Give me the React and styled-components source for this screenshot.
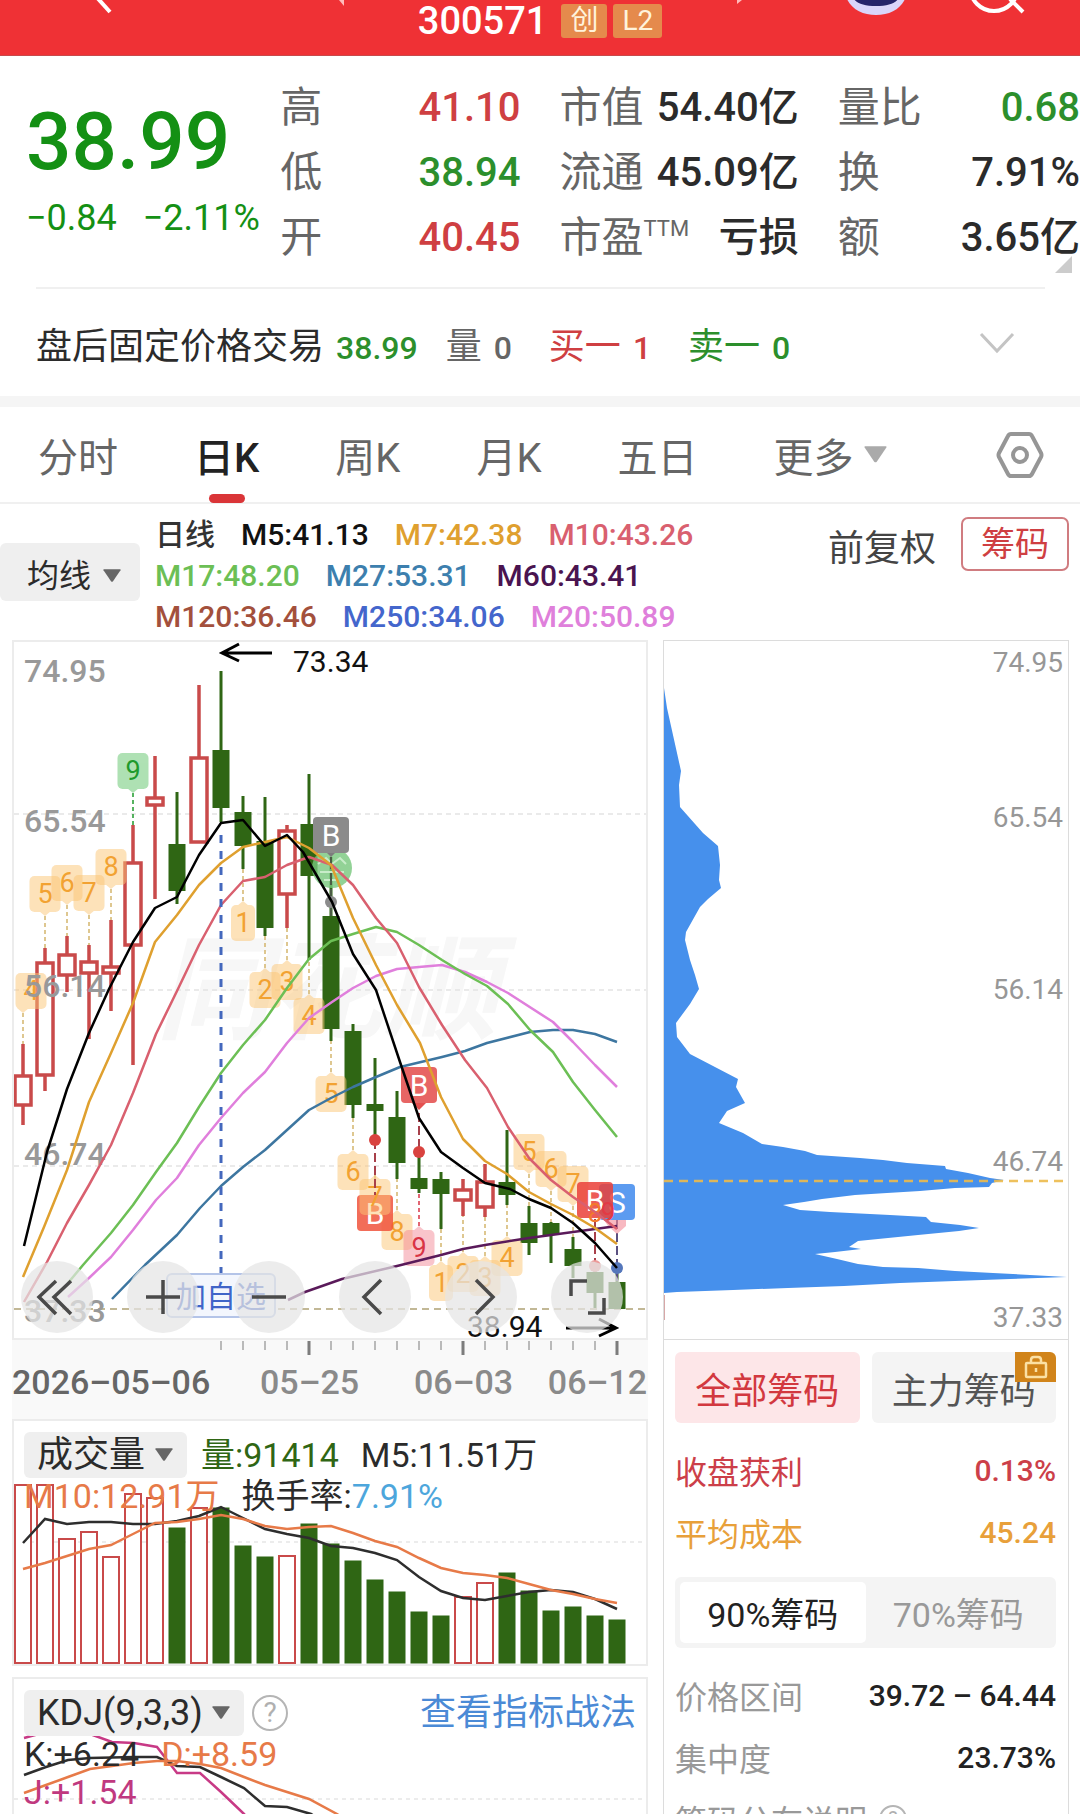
import React from "react";
import styled, { createGlobalStyle } from "styled-components";

const C = {
  up: "#cf3f42",
  down: "#2c8f2c",
  candleUp: "#c94a4a",
  candleDown: "#2f6614",
  ink: "#2b2b2b",
  label: "#666666",
  faint: "#999999",
  orange: "#e77a48",
};

const sans = '"Roboto", "Noto Sans CJK SC", sans-serif';

const Global = createGlobalStyle`
  * { box-sizing: border-box; }
  body { margin: 0; background: #fff; }
  button, select { font: inherit; color: inherit; border: 0; background: none; padding: 0; margin: 0; }
  dl, dd, dt, h1, p { margin: 0; font-weight: inherit; font-size: inherit; }
`;

const Screen = styled.div`
  height: 100vh;
  overflow: hidden;
  background: #fff;
  color: ${C.ink};
  font-family: ${sans};
`;

/* ---------- header ---------- */
const Header = styled.header`
  display: grid;
  grid-template-columns: 1fr auto 1fr;
  height: 56px;
  background: #ef3135;
  border-bottom: 1px solid #c8494b;
  color: #fff;
`;
const HeaderSide = styled.div`
  display: flex;
  align-items: flex-start;
  justify-content: ${(p) => (p.$end ? "flex-end" : "space-between")};
  gap: ${(p) => (p.$end ? "62px" : "0")};
  padding: ${(p) => (p.$end ? "0 53px 0 75px" : "0 73px 0 92px")};
  & > :first-child { margin-right: auto; }
`;
const IconButton = styled.button`
  display: flex;
  color: ${(p) => p.$color || "#fff"};
`;
const Title = styled.div`
  display: flex;
  align-items: center;
  gap: 6px;
  height: 42px;
`;
const Code = styled.h1`
  && { font-size: 38px; font-weight: 500; }
  line-height: 42px;
  margin-right: 8px;
`;
const Tag = styled.span`
  height: 34px;
  padding: 0 9px;
  border-radius: 3px;
  background: #e58a4c;
  color: #fff3dc;
  font-size: 28px;
  line-height: 34px;
`;

/* ---------- quote ---------- */
const Quote = styled.section`
  position: relative;
  display: grid;
  grid-template-columns: 254fr 279fr 278fr 242fr;
  padding: 19px 0 17px 26px;
`;
const Price = styled.div`
  padding-top: 22px;
  color: #149014;
  white-space: nowrap;
`;
const Last = styled.p`
  && { font-size: 80px; font-weight: 500; }
  line-height: 90px;
`;
const Change = styled.p`
  display: flex;
  gap: 26px;
  line-height: 62px;
  && { font-size: 36px; }
`;
const Stats = styled.dl`
  padding-right: ${(p) => (p.$last ? "0" : "39px")};
`;
const Stat = styled.div`
  display: flex;
  justify-content: space-between;
  height: 65px;
  line-height: 65px;
  white-space: nowrap;
`;
const StatName = styled.dt`
  && { font-size: 42px; }
  color: ${C.label};
  sup { font-size: 22px; line-height: 0; vertical-align: 16px; font-weight: 400; }
`;
const StatValue = styled.dd`
  && { font-size: 40px; font-weight: 500; }
  color: ${(p) => p.$color || C.ink};
`;
const Corner = styled.svg`
  position: absolute;
  right: 8px;
  bottom: 14px;
`;

const AfterHours = styled.section`
  display: flex;
  align-items: center;
  height: 109px;
  margin: 0 35px 0 36px;
  border-top: 2px solid #f0f0f0;
  font-size: 36px;
  white-space: nowrap;
`;
const Pair = styled.span`
  display: flex;
  align-items: baseline;
  gap: 12px;
  margin-right: ${(p) => p.$after || 0}px;
  color: ${(p) => p.$color || C.ink};
`;
const Num = styled.span`
  font-size: 32px;
  font-weight: 500;
  color: ${(p) => p.$color || "inherit"};
`;
const Push = styled.span`
  margin-left: auto;
  padding-right: 30px;
  display: flex;
`;

/* ---------- tabs ---------- */
const Tabs = styled.nav`
  display: flex;
  align-items: stretch;
  gap: 76px;
  height: 108px;
  padding: 0 36px 0 38px;
  border-top: 11px solid #f5f5f5;
  border-bottom: 2px solid #f0f0f0;
`;
const Tab = styled.button`
  position: relative;
  display: flex;
  align-items: center;
  gap: 10px;
  font-size: 40px;
  white-space: nowrap;
  font-weight: ${(p) => (p.$on ? 500 : 400)};
  color: ${(p) => (p.$on ? "#222" : "#666")};
  &::after {
    content: "";
    display: ${(p) => (p.$on ? "block" : "none")};
    position: absolute;
    left: calc(50% - 18px);
    bottom: -1px;
    width: 36px;
    height: 9px;
    border-radius: 5px;
    background: #da3538;
  }
`;
const Settings = styled(IconButton)`
  align-items: center;
  margin-left: auto;
`;

/* ---------- indicator bar ---------- */
const Bar = styled.section`
  display: flex;
  align-items: flex-start;
  height: 136px;
  padding-right: 11px;
`;
const Picker = styled.label`
  display: inline-grid;
  align-items: center;
  margin-top: ${(p) => (p.$left ? 39 : 0)}px;
  padding-top: ${(p) => (p.$left ? 8 : 0)}px;
  height: ${(p) => (p.$left ? 58 : 46)}px;
  border-radius: 6px;
  background: #efefef;
  font-size: ${(p) => (p.$left ? 32 : 36)}px;
  color: ${C.ink};
  & > * { grid-area: 1 / 1; }
  svg { justify-self: end; margin-right: ${(p) => (p.$left ? 19 : 14)}px; pointer-events: none; }
  select {
    appearance: none;
    height: 100%;
    padding: 0 ${(p) => (p.$left ? 48 : 41)}px 0 ${(p) => (p.$left ? 27 : 13)}px;
  }
`;
const Averages = styled.div`
  padding: 10px 0 0 15px;
  font-size: 30px;
  font-weight: 500;
  line-height: 41px;
  white-space: nowrap;
`;
const AvgRow = styled.div`
  display: flex;
  gap: 26px;
`;
const Ink = styled.span`
  color: ${(p) => p.$color};
`;
const BarActions = styled.div`
  display: flex;
  align-items: flex-end;
  gap: 25px;
  margin: 13px 0 0 auto;
  font-size: 36px;
  line-height: 44px;
  color: #444;
`;
const Outlined = styled.button`
  height: 54px;
  padding: 0 18px;
  border: 2px solid #d07c80;
  border-radius: 7px;
  font-size: 34px;
  color: ${C.up};
`;

/* ---------- charts ---------- */
const Columns = styled.main`
  display: grid;
  grid-template-columns: 636fr 406fr;
  gap: 15px;
  padding: 0 11px 0 12px;
  align-items: start;
`;
const Column = styled.div`
  min-width: 0;
`;
const Panel = styled.section`
  display: grid;
  border: 2px solid #ececec;
  margin-bottom: ${(p) => p.$after || 0}px;
  & > * { grid-area: 1 / 1; min-width: 0; }
`;
const Plot = styled.svg`
  display: block;
  width: 100%;
  height: auto;
  font-family: ${sans};
`;
const Controls = styled.div`
  align-self: end;
  display: flex;
  gap: 34px;
  padding: 0 0 5px 7px;
`;
const Round = styled.button`
  display: flex;
  align-items: center;
  justify-content: center;
  width: 72px;
  height: 72px;
  border-radius: 50%;
  background: rgba(228, 228, 228, 0.72);
  color: #4a4a4a;
`;
const Legend = styled.div`
  padding: 11px 10px 0;
  font-size: 34px;
  white-space: nowrap;
`;
const LegendRow = styled.div`
  display: flex;
  align-items: center;
  gap: ${(p) => p.$gap || 22}px;
  height: ${(p) => p.$h || 36}px;
  line-height: ${(p) => p.$h || 36}px;
`;
const Help = styled.button`
  width: ${(p) => p.$size || 36}px;
  height: ${(p) => p.$size || 36}px;
  border: 2px solid #b5b5b5;
  border-radius: 50%;
  color: #b0b0b0;
  font-size: ${(p) => (p.$size ? 20 : 28)}px;
  line-height: 1;
`;
const HelpLink = styled.a`
  margin-left: auto;
  font-size: 36px;
  color: #4b8ad6;
  text-decoration: none;
`;

/* ---------- chip distribution ---------- */
const Side = styled.aside`
  min-width: 0;
  border: 1px solid #dcdcdc;
`;
const SideBody = styled.div`
  padding: 12px 12px 0 11px;
  border-top: 1px solid #dcdcdc;
`;
const Choice = styled.div`
  display: grid;
  grid-template-columns: 1fr 1fr;
  gap: 12px;
`;
const ChoiceButton = styled.button`
  position: relative;
  height: 71px;
  border-radius: 6px;
  font-size: 36px;
  white-space: nowrap;
  background: ${(p) => (p.$on ? "#fde6e8" : "#f4f4f4")};
  color: ${(p) => (p.$on ? "#d2383f" : "#555")};
`;
const Lock = styled.span`
  position: absolute;
  top: 0;
  right: 0;
  display: flex;
  align-items: center;
  justify-content: center;
  width: 41px;
  height: 30px;
  border-radius: 0 6px 0 0;
  background: #d1841a;
`;
const Facts = styled.dl`
  padding-top: 16px;
`;
const Fact = styled.div`
  display: flex;
  align-items: center;
  justify-content: space-between;
  height: 62px;
  font-size: 32px;
  white-space: nowrap;
  color: ${(p) => p.$color || C.faint};
  && dd { font-size: 30px; font-weight: 500; color: ${(p) => p.$color || "#222"}; }
`;
const Segments = styled.div`
  display: grid;
  grid-template-columns: 1fr 1fr;
  margin-top: 14px;
  padding: 5px;
  height: 71px;
  border-radius: 6px;
  background: #f4f4f4;
`;
const Segment = styled.button`
  border-radius: 5px;
  font-size: 34px;
  background: ${(p) => (p.$on ? "#fff" : "transparent")};
  color: ${(p) => (p.$on ? "#222" : C.faint)};
`;
const Note = styled.p`
  display: flex;
  align-items: center;
  gap: 12px;
  height: 62px;
  && { font-size: 32px; }
  color: ${C.faint};
`;

/* ---------- data ---------- */
const X = (i) => 23 + 22 * i;
// [up?, high, body top, body bottom, low]
const candles = [
  [1, 1044, 1076, 1105, 1125], [1, 948, 963, 1075, 1091], [1, 936, 955, 975, 992],
  [1, 945, 962, 973, 1039], [1, 920, 967, 973, 1011], [1, 825, 863, 945, 1065],
  [1, 756, 798, 805, 899], [0, 792, 844, 891, 904], [1, 685, 758, 842, 842],
  [0, 671, 750, 808, 822], [0, 796, 812, 846, 869], [0, 797, 841, 928, 936],
  [1, 825, 831, 894, 928], [0, 774, 824, 876, 960], [0, 857, 916, 1029, 1041],
  [0, 1024, 1031, 1105, 1118], [0, 1058, 1104, 1111, 1140], [0, 1091, 1117, 1163, 1179],
  [0, 1150, 1178, 1189, 1193], [0, 1172, 1179, 1194, 1229], [1, 1179, 1190, 1200, 1216],
  [1, 1164, 1182, 1207, 1217], [0, 1130, 1182, 1195, 1205], [0, 1206, 1223, 1243, 1255],
  [0, 1222, 1223, 1235, 1263], [0, 1237, 1249, 1266, 1278], [0, 1263, 1272, 1293, 1308],
  [0, 1268, 1282, 1309, 1309],
];
const averages = [
  ["#5a1a5a", "288,1300 305,1292 342,1279 397,1266 441,1255 463,1249 485,1245 529,1238 573,1232 617,1226"],
  ["#3d76a0", "112,1299 145,1265 177,1235 200,1208 221,1186 243,1167 265,1150 287,1130 309,1110 331,1098 353,1087 376,1077 400,1067 442,1057 465,1051 487,1043 530,1032 553,1030 573,1030 595,1034 617,1042"],
  ["#e07fdc", "68,1297 89,1278 111,1257 133,1230 156,1200 177,1178 199,1145 221,1118 243,1093 265,1072 287,1043 309,1018 332,1002 353,988 376,976 397,969 419,967 442,965 465,972 487,982 508,993 553,1022 573,1042 595,1065 617,1087"],
  ["#6cbf55", "68,1283 83,1265 111,1233 133,1205 156,1172 177,1143 199,1107 221,1073 243,1045 265,1020 287,988 309,959 331,941 353,934 376,927 397,932 419,945 442,960 465,974 487,986 508,1004 530,1030 553,1052 573,1082 595,1110 617,1137"],
  ["#d9606f", "24,1302 47,1262 67,1223 89,1185 111,1145 133,1093 156,1034 177,991 199,945 221,905 243,881 265,877 287,865 309,857 332,865 353,885 376,918 397,943 419,987 442,1025 465,1060 487,1088 508,1127 529,1158 551,1180 573,1197 595,1212 617,1229"],
  ["#dfa02f", "23,1277 44,1227 67,1170 89,1102 111,1053 133,1003 155,942 177,915 199,885 221,863 243,847 265,842 287,837 309,848 331,865 353,918 376,965 397,1005 420,1043 441,1097 463,1139 485,1161 507,1174 529,1192 551,1204 573,1215 595,1228 617,1244"],
  ["#000000", "24,1246 47,1152 67,1089 89,1033 109,989 133,942 155,908 177,897 199,855 221,823 243,820 265,846 287,835 303,852 332,902 353,954 376,990 400,1062 419,1118 441,1152 463,1168 485,1183 510,1189 529,1199 551,1208 573,1223 595,1243 617,1268"],
];
// [digit, x, top, pointer side, line end, pointer x]
const marks = [
  ["4", 31, 973, "down", 1044, 23], ["5", 45, 876, "down", 948], ["6", 67, 865, "down", 936],
  ["7", 89, 875, "down", 945], ["8", 111, 849, "down", 920], ["1", 243, 905, "up", 869],
  ["2", 265, 972, "up", 936], ["3", 287, 964, "up", 928], ["4", 309, 998, "up", 960],
  ["5", 331, 1076, "up", 1041], ["6", 353, 1154, "up", 1118],
  ["8", 397, 1214, "up", 1179], ["1", 441, 1265, "up", 1229], ["2", 463, 1256, "up", 1216],
  ["3", 485, 1260, "up", 1217], ["4", 507, 1240, "up", 1205], ["5", 529, 1134, "down", 1206],
  ["6", 551, 1151, "down", 1222], ["7", 573, 1166, "down", 1237],
];
const volumes = [
  [1, 1485], [1, 1485], [1, 1539], [1, 1532], [1, 1557], [1, 1494], [1, 1498], [0, 1528],
  [1, 1508], [0, 1508], [0, 1546], [0, 1557], [1, 1556], [0, 1524], [0, 1544], [0, 1561],
  [0, 1580], [0, 1592], [0, 1612], [0, 1616], [1, 1597], [1, 1583], [0, 1573], [0, 1591],
  [0, 1611], [0, 1607], [0, 1616], [0, 1620],
];
const volumeLines = [
  ["#2e2e2e", [1543, 1519, 1524, 1522, 1522, 1524, 1524, 1521, 1516, 1507, 1518, 1529, 1534, 1538, 1546, 1548, 1553, 1560, 1577, 1591, 1598, 1600, 1596, 1592, 1590, 1592, 1599, 1609]],
  [C.orange, [1569, 1563, 1556, 1549, 1545, 1534, 1523, 1522, 1519, 1515, 1519, 1526, 1529, 1527, 1526, 1533, 1541, 1547, 1558, 1568, 1573, 1575, 1578, 1584, 1590, 1594, 1599, 1603]],
];
const chips =
  "664,688 667,708 681,771 679,785 680,807 703,833 718,846 720,865 719,880 721,888 708,899 700,907 686,932 685,940 690,960 695,975 699,989 690,1004 676,1023 677,1037 690,1054 738,1079 736,1087 745,1103 727,1111 719,1123 743,1133 762,1144 783,1147 805,1151 817,1155 860,1158 883,1160 907,1163 945,1166 946,1169 968,1173 990,1178 1004,1180 992,1183 989,1187 955,1188 920,1191 887,1193 855,1195 822,1199 804,1202 783,1205 800,1210 830,1212 890,1215 926,1217 931,1222 960,1225 979,1228 959,1231 918,1235 878,1239 858,1241 849,1247 861,1249 835,1252 815,1254 837,1259 858,1264 883,1267 918,1268 955,1271 993,1273 1030,1275 1067,1277 1010,1279 955,1281 900,1283 844,1286 788,1288 733,1290 677,1292 664,1293";

const averageLegend = [
  [["日线", "#333"], ["M5:41.13", "#111"], ["M7:42.38", "#dfa02f"], ["M10:43.26", "#d9606f"]],
  [["M17:48.20", "#6cbf55"], ["M27:53.31", "#3d7fae"], ["M60:43.41", "#4a1450"]],
  [["M120:36.46", "#a3503c"], ["M250:34.06", "#4466cc"], ["M20:50.89", "#df80db"]],
];
const stats = [
  [["高", "41.10", C.up], ["低", "38.94", C.down], ["开", "40.45", C.up]],
  [["市值", "54.40亿"], ["流通", "45.09亿"], ["市盈", "亏损", null, "TTM"]],
  [["量比", "0.68", C.down], ["换", "7.91%"], ["额", "3.65亿"]],
];
const priceScale = ["74.95", "65.54", "56.14", "46.74", "37.33"];

/* ---------- chart parts ---------- */
const Triangle = ({ size = 18, color = "#666" }) => (
  <svg width={size} height={size * 0.75} viewBox="0 0 18 13" aria-hidden="true">
    <path d="M1 0h16q1 0 .5 1l-7.500 11q-1 1-2 0L.5 1Q0 0 1 0z" fill={color} />
  </svg>
);

function Mark({ digit, x, top, side, lineX, to, fill = "#fcc675", color = "#f2a232" }) {
  const w = digit === "1" ? 24 : 31;
  const lx = lineX || x;
  const tip = side === "down" ? top + 40 : top - 4;
  const base = side === "down" ? top + 35 : top + 1;
  return (
    <g>
      <line x1={lx} x2={lx} y1={tip} y2={to} stroke={digit === "9" ? color : "#d3b56c"} strokeWidth="1.500" strokeDasharray="4 3" />
      <g fill={fill} opacity="0.5">
        <rect x={x - w / 2} y={top} width={w} height="36" rx="5" />
        <path d={`M${lx - 6} ${base}L${lx} ${tip}L${lx + 6} ${base}z`} />
      </g>
      <text x={x} y={top + 27} fontSize="27" textAnchor="middle" fill={color}>{digit}</text>
    </g>
  );
}

function Trade({ letter, x, y, fill, opacity = 1 }) {
  return (
    <g>
      <rect x={x} y={y} width="36" height="36" rx="4" fill={fill} opacity={opacity} />
      <text x={x + 18} y={y + 29} fontSize="30" textAnchor="middle" fill="#fff">{letter}</text>
    </g>
  );
}

function PriceChart() {
  const scaleY = [682, 832, 997, 1165, 1322];
  return (
    <Plot viewBox="14 642 632 696" role="img" aria-label="日K线图">
      <text x="156" y="1030" fontSize="114" fontWeight="700" fontStyle="italic" fill="#f7f7f7">同花顺</text>
      {[814, 990, 1166].map((y) => (
        <line key={y} x1="14" x2="646" y1={y} y2={y} stroke="#e4e4e4" strokeWidth="1.500" strokeDasharray="5 4" />
      ))}
      <line x1="14" x2="646" y1="1309" y2="1309" stroke="#c2b896" strokeWidth="2" strokeDasharray="7 5" />
      {candles.map(([up, hi, t, b, lo], i) =>
        up ? (
          <g key={i} stroke={C.candleUp} strokeWidth="3.500" fill="#fff">
            <path d={`M${X(i)} ${hi}V${t}M${X(i)} ${b}V${lo}`} />
            <rect x={X(i) - 8} y={t} width="16" height={b - t} />
          </g>
        ) : (
          <g key={i} fill={C.candleDown}>
            <rect x={X(i) - 1.5} y={hi} width="3" height={lo - hi} />
            <rect x={X(i) - 8.5} y={t} width="17" height={b - t} />
          </g>
        )
      )}
      {marks.map(([d, x, top, side, to, lineX], i) => (
        <Mark key={i} digit={d} x={x} top={top} side={side} to={to} lineX={lineX} />
      ))}
      <Mark digit="9" x={133} top={753} side="down" to={825} fill="#5fc46a" color="#1f9a2c" />
      <Mark digit="9" x={419} top={1230} side="up" to={1193} fill="#f48a98" color="#d93445" />
      <g fontSize="32" fontWeight="500" fill="#999">
        {priceScale.map((p, i) => (
          <text key={p} x="24" y={scaleY[i]}>{p}</text>
        ))}
      </g>
      <g>
        <circle cx="332" cy="868" r="20" fill="#77c77c" opacity="0.8" />
        <path d="M318 864l8-6 6 6 8-6 6 6M320 872h24M324 880h14" stroke="#c8ecc9" strokeWidth="2" fill="none" />
        <path d="M325 851h12l-6 6z" fill="#7d7d7d" />
        <line x1="331" x2="331" y1="857" y2="916" stroke="#4b5c45" strokeWidth="2" strokeDasharray="12 4" />
        <circle cx="331" cy="902" r="6" fill="#8c8c8c" />
        <Trade letter="B" x={313} y={817} fill="#8b8b8b" />
      </g>
      <Trade letter="B" x={401} y={1067} fill="#e4504f" opacity={0.88} />
      <path d="M412 1103h14l-7 7z" fill="#e4504f" />
      <Trade letter="B" x={357} y={1195} fill="#f0533c" opacity={0.85} />
      <Mark digit="7" x={375} top={1179} side="up" to={1179} />
      <path d="M375 1140V1195M419 1113V1150M595 1219V1262" stroke="#a8404a" strokeWidth="2" strokeDasharray="9 4" />
      <path d="M617 1220V1282" stroke="#5a5080" strokeWidth="2" strokeDasharray="9 4" />
      <circle cx="375" cy="1140" r="6" fill="#d9433f" />
      <circle cx="419" cy="1152" r="6" fill="#d9433f" />
      <circle cx="595" cy="1266" r="6" fill="#ec9a98" />
      <circle cx="617" cy="1268" r="6" fill="#5577bb" />
      <Trade letter="S" x={599} y={1184} fill="#4a90ee" opacity={0.9} />
      <Trade letter="B" x={577} y={1182} fill="#ea4038" opacity={0.85} />
      <path d="M604 1220h22v6l-9 8-9-8z" fill="#f48a98" opacity="0.6" />
      <text x="595" y="1222" fontSize="26" textAnchor="middle" fill="#f27a2c">8</text>
      <text x="608" y="1221" fontSize="26" textAnchor="middle" fill="#e23a45">9</text>
      {averages.map(([color, points]) => (
        <polyline key={color} points={points} fill="none" stroke={color} strokeWidth="2.500" strokeLinejoin="round" />
      ))}
      <line x1="221" x2="221" y1="835" y2="1274" stroke="#4468bd" strokeWidth="3" strokeDasharray="8 8" />
      <rect x="167" y="1274" width="108" height="43" rx="5" fill="#f3f6fd" stroke="#b4c4e8" strokeWidth="2" />
      <text x="221" y="1307" fontSize="30" textAnchor="middle" fill="#4064c8">加自选</text>
      <path d="M272 653H222M239 644L222 653L239 661M566 1328H616M599 1319L616 1328L599 1336" stroke="#000" strokeWidth="3" fill="none" />
      <g fontSize="30" fill="#111">
        <text x="293" y="672">73.34</text>
        <text x="467" y="1337">38.94</text>
      </g>
    </Plot>
  );
}

function TimeAxis() {
  const ticks = Array.from({ length: 19 }, (_, i) => i + 9);
  const major = [13, 20, 27];
  return (
    <Plot viewBox="12 1340 636 79" role="img" aria-label="日期">
      <rect x="12" y="1340" width="636" height="79" fill="#f9f9f9" />
      {ticks.map((i) => (
        <rect
          key={i}
          x={X(i) - (major.includes(i) ? 1.5 : 0.5)}
          y="1341"
          width={major.includes(i) ? 3 : 1}
          height={major.includes(i) ? 14 : 9}
          fill="#7d7d7d"
        />
      ))}
      <g fontSize="34" fontWeight="500" fill="#8a8a8a">
        <text x="12" y="1394" fill="#666">2026–05–06</text>
        <text x="260" y="1394">05–25</text>
        <text x="414" y="1394">06–03</text>
        <text x="647" y="1394" textAnchor="end">06–12</text>
      </g>
    </Plot>
  );
}

function VolumeChart() {
  return (
    <Plot viewBox="14 1421 632 243" role="img" aria-label="成交量图">
      <line x1="14" x2="646" y1="1542" y2="1542" stroke="#e6e6e6" strokeWidth="1.500" strokeDasharray="4 4" />
      {volumes.map(([up, top], i) => (
        <rect
          key={i}
          x={X(i) - 8}
          y={top}
          width="16"
          height={1663 - top}
          fill={up ? "#fff" : C.candleDown}
          stroke={up ? C.candleUp : C.candleDown}
          strokeWidth={up ? 2 : 1}
        />
      ))}
      {volumeLines.map(([color, ys]) => (
        <polyline key={color} points={ys.map((y, i) => `${X(i)},${y}`).join(" ")} fill="none" stroke={color} strokeWidth="2.500" />
      ))}
    </Plot>
  );
}

function KdjChart() {
  return (
    <Plot viewBox="14 1679 632 180" role="img" aria-label="KDJ指标图">
      <line x1="14" x2="646" y1="1799" y2="1799" stroke="#e6e6e6" strokeWidth="1.500" strokeDasharray="4 4" />
      <g fill="none" strokeWidth="2.500">
        <polyline stroke="#c83a86" points="24,1738 46,1732 68,1732 90,1734 112,1742 134,1743 157,1747 177,1773 200,1773 221,1792 244,1814 265,1836" />
        <polyline stroke="#2e2e2e" points="24,1775 46,1767 68,1760 90,1758 134,1757 157,1757 177,1766 200,1767 221,1777 244,1788 265,1806 287,1807 311,1814 340,1832" />
        <polyline stroke={C.orange} points="24,1793 46,1785 68,1777 90,1769 112,1766 134,1763 157,1761 177,1761 200,1764 221,1768 244,1777 265,1785 309,1799 337,1814 360,1830" />
      </g>
    </Plot>
  );
}

function ChipChart() {
  const ys = [672, 827, 999, 1171, 1327];
  return (
    <Plot viewBox="664 641 404 698" role="img" aria-label="筹码分布图">
      <polygon points={chips} fill="#4690ec" />
      <line x1="664" x2="1068" y1="1181" y2="1181" stroke="#edbb4c" strokeWidth="2.500" strokeDasharray="9 6" opacity="0.9" />
      <line x1="664" x2="664" y1="1295" y2="1320" stroke="#b05050" strokeWidth="1" />
      <g fontSize="28" fill="#979797" textAnchor="end">
        {priceScale.map((p, i) => (
          <text key={p} x="1063" y={ys[i]}>{p}</text>
        ))}
      </g>
    </Plot>
  );
}

const controlIcons = [
  ["首页", "M27 12L10 28L27 45M42 12L25 28L42 45"],
  ["放大", "M28 11V45M11 28H45"],
  ["缩小", "M11 28H45"],
  ["向左", "M34 11L17 28L34 45"],
  ["向右", "M23 11L40 28L23 45"],
  ["全屏", "M12 27V12H28M29 44H45V29"],
];

export default function App() {
  return (
    <Screen>
      <Global />
      <Header>
        <HeaderSide>
          <IconButton aria-label="返回">
            <svg width="22" height="16" viewBox="0 0 22 16"><path d="M0-8L18 12" stroke="#fff" strokeWidth="4" /></svg>
          </IconButton>
          <IconButton aria-label="上一只">
            <svg width="6" height="8" viewBox="0 0 6 8"><path d="M0 0h5v6z" fill="#fbb" /></svg>
          </IconButton>
        </HeaderSide>
        <Title>
          <Code>300571</Code>
          <Tag>创</Tag>
          <Tag>L2</Tag>
        </Title>
        <HeaderSide $end>
          <IconButton aria-label="下一只">
            <svg width="6" height="8" viewBox="0 0 6 8"><path d="M0 0h5L0 4z" fill="#fbb" /></svg>
          </IconButton>
          <IconButton aria-label="助手">
            <svg width="62" height="16" viewBox="0 0 62 16">
              <path d="M0-6C4 8 16 15 31 15S58 8 62-6z" fill="#d9d5fa" />
              <path d="M7-4C10 3 18 6 31 6S52 3 55-4z" fill="#25246a" />
            </svg>
          </IconButton>
          <IconButton aria-label="搜索">
            <svg width="58" height="16" viewBox="969 0 58 16" fill="none" stroke="#fff" strokeWidth="4">
              <circle cx="994" cy="-13" r="24" />
              <path d="M1010 -1L1023 12" />
            </svg>
          </IconButton>
        </HeaderSide>
      </Header>

      <Quote>
        <Price>
          <Last>38.99</Last>
          <Change><span>−0.84</span><span>−2.11%</span></Change>
        </Price>
        {stats.map((group, g) => (
          <Stats key={g} $last={g === 2}>
            {group.map(([name, value, color, sup]) => (
              <Stat key={name}>
                <StatName>{name}{sup && <sup>{sup}</sup>}</StatName>
                <StatValue $color={color}>{value}</StatValue>
              </Stat>
            ))}
          </Stats>
        ))}
        <Corner width="17" height="17" viewBox="0 0 17 17" aria-hidden="true"><path d="M17 0V17H0z" fill="#ccc" /></Corner>
      </Quote>

      <AfterHours>
        <Pair $after={28}>盘后固定价格交易<Num $color={C.down}>38.99</Num></Pair>
        <Pair $after={37} $color="#666">量<Num>0</Num></Pair>
        <Pair $after={37} $color={C.up}>买一<Num>1</Num></Pair>
        <Pair $color={C.down}>卖一<Num>0</Num></Pair>
        <Push>
          <IconButton aria-label="展开" $color="#c4c4c4">
            <svg width="36" height="22" viewBox="0 0 36 22"><path d="M2 2L18 19L34 2" fill="none" stroke="currentColor" strokeWidth="3" /></svg>
          </IconButton>
        </Push>
      </AfterHours>

      <Tabs>
        <Tab>分时</Tab>
        <Tab $on>日K</Tab>
        <Tab>周K</Tab>
        <Tab>月K</Tab>
        <Tab>五日</Tab>
        <Tab aria-haspopup="menu">更多<Triangle size={23} color="#aaa" /></Tab>
        <Settings aria-label="设置" $color="#969696">
          <svg width="48" height="48" viewBox="0 0 48 48" fill="none" stroke="currentColor" strokeWidth="4" strokeLinejoin="round">
            <path d="M15 3H33Q35 3 36 5L45 22Q46 24 45 26L36 43Q35 45 33 45H15Q13 45 12 43L3 26Q2 24 3 22L12 5Q13 3 15 3z" />
            <circle cx="24" cy="24" r="7" />
          </svg>
        </Settings>
      </Tabs>

      <Bar>
        <Picker $left>
          <select aria-label="指标"><option>均线</option></select>
          <Triangle />
        </Picker>
        <Averages>
          {averageLegend.map((row, i) => (
            <AvgRow key={i}>{row.map(([t, c]) => <Ink key={t} $color={c}>{t}</Ink>)}</AvgRow>
          ))}
        </Averages>
        <BarActions>
          <button>前复权</button>
          <Outlined>筹码</Outlined>
        </BarActions>
      </Bar>

      <Columns>
        <Column>
          <Panel>
            <PriceChart />
            <Controls>
              {controlIcons.map(([name, d]) => (
                <Round key={name} aria-label={name}>
                  <svg width="56" height="56" viewBox="0 0 56 56" fill="none" stroke="currentColor" strokeWidth="3.500"><path d={d} /></svg>
                </Round>
              ))}
            </Controls>
          </Panel>
          <TimeAxis />
          <Panel $after={11}>
            <VolumeChart />
            <Legend>
              <LegendRow $h={46} $gap={14}>
                <Picker>
                  <select aria-label="副图指标"><option>成交量</option></select>
                  <Triangle />
                </Picker>
                <LegendRow as="span" $h={46}>
                  <Ink $color={C.candleDown}>量:91414</Ink>
                  <Ink $color={C.ink}>M5:11.51万</Ink>
                </LegendRow>
              </LegendRow>
              <LegendRow>
                <Ink $color={C.orange}>M10:12.91万</Ink>
                <span>换手率:<Ink $color="#4da6dc">7.91%</Ink></span>
              </LegendRow>
            </Legend>
          </Panel>
          <Panel>
            <KdjChart />
            <Legend>
              <LegendRow $h={46} $gap={8}>
                <Picker>
                  <select aria-label="副图指标二"><option>KDJ(9,3,3)</option></select>
                  <Triangle />
                </Picker>
                <Help aria-label="说明">?</Help>
                <HelpLink href="#kdj">查看指标战法</HelpLink>
              </LegendRow>
              <LegendRow>
                <Ink $color={C.ink}>K:+6.24</Ink>
                <Ink $color={C.orange}>D:+8.59</Ink>
              </LegendRow>
              <LegendRow $h={40}><Ink $color="#c0397f">J:+1.54</Ink></LegendRow>
            </Legend>
          </Panel>
        </Column>

        <Side>
          <ChipChart />
          <SideBody>
            <Choice>
              <ChoiceButton $on>全部筹码</ChoiceButton>
              <ChoiceButton>
                主力筹码
                <Lock>
                  <svg width="24" height="24" viewBox="0 0 24 24" fill="none" stroke="#fbe0a4" strokeWidth="2.500">
                    <rect x="2" y="8" width="20" height="14" rx="1" />
                    <path d="M7 8V5q0-3 3-3h4q3 0 3 3V8M12 13V17" />
                  </svg>
                </Lock>
              </ChoiceButton>
            </Choice>
            <Facts>
              <Fact $color="#cc3f49"><dt>收盘获利</dt><dd>0.13%</dd></Fact>
              <Fact $color="#e8a03a"><dt>平均成本</dt><dd>45.24</dd></Fact>
            </Facts>
            <Segments>
              <Segment $on>90%筹码</Segment>
              <Segment>70%筹码</Segment>
            </Segments>
            <Facts>
              <Fact><dt>价格区间</dt><dd>39.72 – 64.44</dd></Fact>
              <Fact><dt>集中度</dt><dd>23.73%</dd></Fact>
            </Facts>
            <Note>筹码分布说明<Help $size={28} aria-label="筹码说明">?</Help></Note>
          </SideBody>
        </Side>
      </Columns>
    </Screen>
  );
}
